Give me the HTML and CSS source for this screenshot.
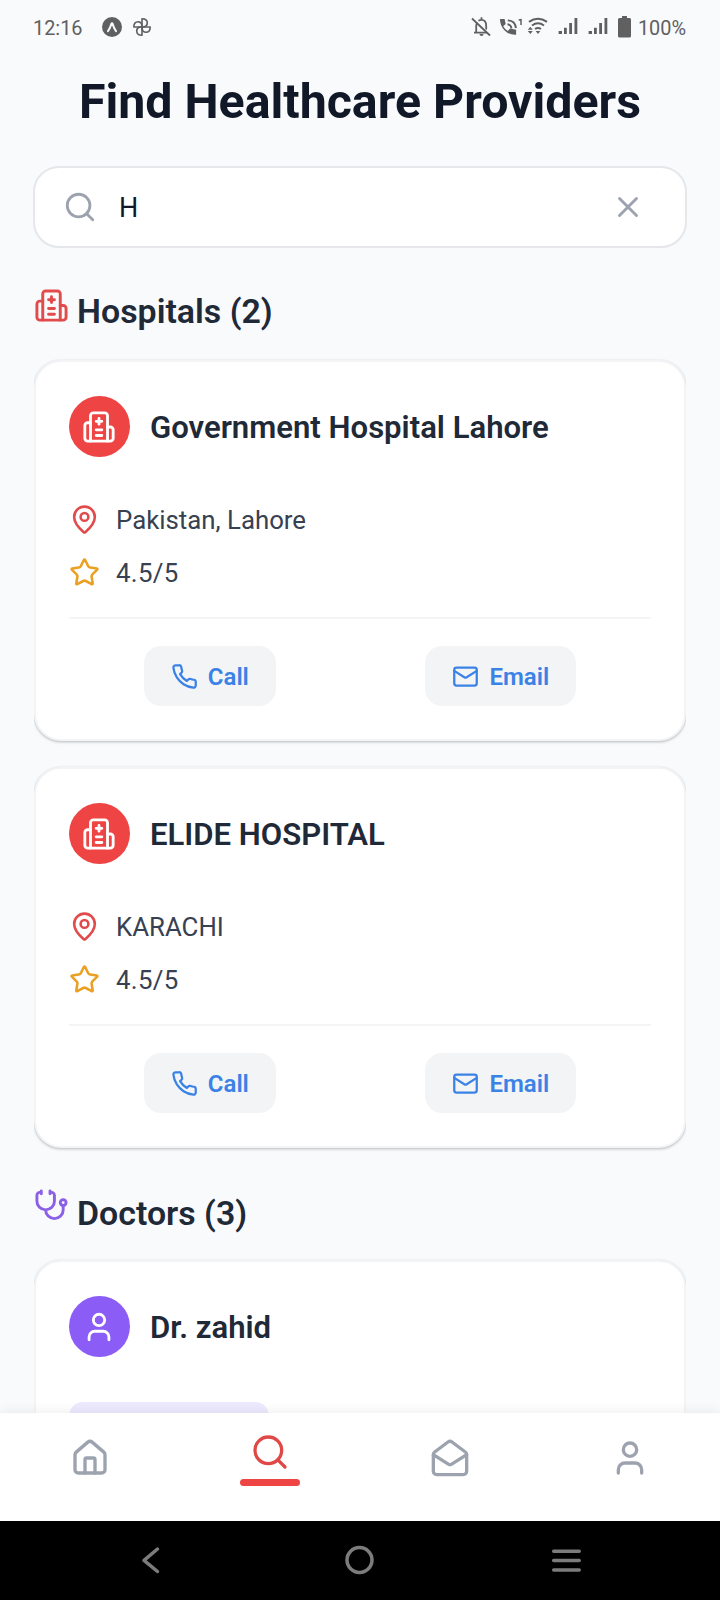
FILE: index.html
```html
<!DOCTYPE html>
<html lang="en">
<head>
<meta charset="utf-8">
<title>Find Healthcare Providers</title>
<link rel="stylesheet" href="styles.css">
</head>
<body>
<svg class="defs" width="0" height="0">
  <symbol id="search" viewBox="0 0 24 24"><circle cx="11" cy="11" r="8"/><path d="m21 21-4.3-4.3"/></symbol>
  <symbol id="close" viewBox="0 0 24 24"><path d="M18 6 6 18M6 6l12 12"/></symbol>
  <symbol id="hospital" viewBox="0 0 24 24"><path d="M12 6v4M14 14h-4M14 18h-4M14 8h-4M18 12h2a2 2 0 0 1 2 2v6a2 2 0 0 1-2 2H4a2 2 0 0 1-2-2v-9a2 2 0 0 1 2-2h2"/><path d="M18 22V4a2 2 0 0 0-2-2H8a2 2 0 0 0-2 2v18"/></symbol>
  <symbol id="pin" viewBox="0 0 24 24"><path d="M20 10c0 4.993-5.539 10.193-7.399 11.799a1 1 0 0 1-1.202 0C9.539 20.193 4 14.993 4 10a8 8 0 0 1 16 0"/><circle cx="12" cy="10" r="3"/></symbol>
  <symbol id="star" viewBox="0 0 24 24"><path d="M11.525 2.295a.53.53 0 0 1 .95 0l2.31 4.679a2.123 2.123 0 0 0 1.595 1.16l5.166.756a.53.53 0 0 1 .294.904l-3.736 3.638a2.123 2.123 0 0 0-.611 1.878l.882 5.14a.53.53 0 0 1-.771.56l-4.618-2.428a2.122 2.122 0 0 0-1.973 0L6.396 21.01a.53.53 0 0 1-.77-.56l.881-5.139a2.122 2.122 0 0 0-.611-1.879L2.16 9.795a.53.53 0 0 1 .294-.906l5.165-.755a2.122 2.122 0 0 0 1.597-1.16z"/></symbol>
  <symbol id="phone" viewBox="0 0 24 24"><path d="M22 16.92v3a2 2 0 0 1-2.18 2 19.79 19.79 0 0 1-8.63-3.07 19.5 19.5 0 0 1-6-6 19.79 19.79 0 0 1-3.07-8.67A2 2 0 0 1 4.11 2h3a2 2 0 0 1 2 1.72 12.84 12.84 0 0 0 .7 2.81 2 2 0 0 1-.45 2.11L8.09 9.91a16 16 0 0 0 6 6l1.27-1.27a2 2 0 0 1 2.11-.45 12.84 12.84 0 0 0 2.81.7A2 2 0 0 1 22 16.92z"/></symbol>
  <symbol id="mail" viewBox="0 0 24 24"><rect width="20" height="16" x="2" y="4" rx="2"/><path d="m22 7-8.97 5.7a1.94 1.94 0 0 1-2.06 0L2 7"/></symbol>
  <symbol id="stethoscope" viewBox="0 0 24 24"><path d="M11 2v2M5 2v2M5 3H4a2 2 0 0 0-2 2v4a6 6 0 0 0 12 0V5a2 2 0 0 0-2-2h-1M8 15a6 6 0 0 0 12 0v-3"/><circle cx="20" cy="10" r="2"/></symbol>
  <symbol id="user" viewBox="0 0 24 24"><path d="M19 21v-2a4 4 0 0 0-4-4H9a4 4 0 0 0-4 4v2"/><circle cx="12" cy="7" r="4"/></symbol>
  <symbol id="home" viewBox="0 0 24 24"><path d="M15 21v-8a1 1 0 0 0-1-1h-4a1 1 0 0 0-1 1v8"/><path d="M3 10a2 2 0 0 1 .709-1.528l7-5.999a2 2 0 0 1 2.582 0l7 5.999A2 2 0 0 1 21 10v9a2 2 0 0 1-2 2H5a2 2 0 0 1-2-2z"/></symbol>
  <symbol id="mail-open" viewBox="0 0 24 24"><path d="M21.2 8.4c.5.38.8.97.8 1.6v10a2 2 0 0 1-2 2H4a2 2 0 0 1-2-2V10a2 2 0 0 1 .8-1.6l8-6a2 2 0 0 1 2.4 0l8 6Z"/><path d="m22 10-8.97 5.7a1.94 1.94 0 0 1-2.06 0L2 10"/></symbol>
</svg>

<div class="screen">
  <header class="status">
    <span class="status-text">12:16</span>
    <svg class="status-apps" width="52" height="24" viewBox="100 15 52 24">
      <circle cx="112" cy="27" r="10" fill="#606060"/>
      <path d="M108 31.200q2.200-3 3.300-7.200.7-1.600 1.400 0 1.100 4.200 3.300 7.200" fill="none" stroke="#f9fafb" stroke-width="2" stroke-linecap="round" stroke-linejoin="round"/>
      <g fill="none" stroke="#606060" stroke-width="1.600" stroke-linejoin="round">
        <path d="M142 27V18.800c3.400 0 5.300 2 5.300 4.300 0 1.900-1.500 3.500-3.400 3.900z"/>
        <path d="M142 27V18.800c3.400 0 5.300 2 5.300 4.300 0 1.900-1.500 3.500-3.400 3.900z" transform="rotate(90 142 27)"/>
        <path d="M142 27V18.800c3.400 0 5.300 2 5.300 4.300 0 1.900-1.500 3.500-3.400 3.900z" transform="rotate(180 142 27)"/>
        <path d="M142 27V18.800c3.400 0 5.300 2 5.300 4.300 0 1.900-1.500 3.500-3.400 3.900z" transform="rotate(270 142 27)"/>
      </g>
    </svg>
    <svg class="status-system" width="164" height="24" viewBox="470 15 164 24" fill="#606060">
      <g fill="none" stroke="#606060" stroke-width="1.800">
        <path d="M472 18.500 490 35.500"/>
        <path d="M474 32.700h13M476.200 32.500v-6.500q0-2 1.100-3.500M478.500 20.800q1.400-.9 3-.9 4.700 0 4.700 6v3.600M481.500 17.300v2.500"/>
      </g>
      <path d="M479.500 34h4q0 2-2 2t-2-2z"/>
      <path d="M500 19h4.600l1.100 5-2.500 2.300q1.600 3 4.600 4.600l2.300-2.400 6 1.200v5q-6.800.4-11.500-4.300T500 19z"/>
      <path d="M507.500 24.300q3.500.5 4 4M507.800 20.400q7.500.3 8.100 7.800" fill="none" stroke="#606060" stroke-width="1.900"/>
      <path d="M518.700 20.100l2.300-.4v5.300" fill="none" stroke="#606060" stroke-width="1.500"/>
      <g fill="none" stroke="#606060" stroke-width="2">
        <path d="M529 21.900q8.900-6.500 18 0M532 25.500q6-4.300 12 0M535 29q3-2 6 0"/>
      </g>
      <path d="M538 34l-2.300-3h4.600zM530.300 26.800l2.500 3h-5zM530.300 34l2.500-3h-5z"/>
      <path d="M558.600 31h3.400v3h-3.400zM564 27.700h2.800V34H564zM569.200 23h2.800v11h-2.800zM574.500 18h2.800v16h-2.800z"/>
      <path d="M588.600 31h3.400v3h-3.400zM594 27.700h2.800V34H594zM599.200 23h2.800v11h-2.800zM604.500 18h2.800v16h-2.800z"/>
      <path d="M622 16h5v2h2.500q1.500 0 1.500 1.500v16.500q0 1.500-1.500 1.500h-10q-1.500 0-1.500-1.500V19.500q0-1.500 1.500-1.500h2.500z"/>
    </svg>
    <span class="status-text">100%</span>
  </header>

  <main class="content">
    <h1 class="title">Find Healthcare Providers</h1>

    <div class="search">
      <svg class="icon icon-34"><use href="#search"/></svg>
      <span class="search-text">H</span>
      <svg class="icon icon-34"><use href="#close"/></svg>
    </div>

    <h2 class="section"><svg class="icon section-icon red"><use href="#hospital"/></svg><span class="section-label">Hospitals (2)</span></h2>

    <article class="card">
      <div class="card-head"><span class="avatar"><svg class="icon icon-34"><use href="#hospital"/></svg></span><h3 class="name">Government Hospital Lahore</h3></div>
      <div class="row"><svg class="icon icon-31 red"><use href="#pin"/></svg><span>Pakistan, Lahore</span></div>
      <div class="row"><svg class="icon icon-31 amber"><use href="#star"/></svg><span class="rating">4.5/5</span></div>
      <div class="actions">
        <div class="button"><svg class="icon icon-27"><use href="#phone"/></svg><span>Call</span></div>
        <div class="button"><svg class="icon icon-27"><use href="#mail"/></svg><span>Email</span></div>
      </div>
    </article>

    <article class="card">
      <div class="card-head"><span class="avatar"><svg class="icon icon-34"><use href="#hospital"/></svg></span><h3 class="name">ELIDE HOSPITAL</h3></div>
      <div class="row"><svg class="icon icon-31 red"><use href="#pin"/></svg><span>KARACHI</span></div>
      <div class="row"><svg class="icon icon-31 amber"><use href="#star"/></svg><span class="rating">4.5/5</span></div>
      <div class="actions">
        <div class="button"><svg class="icon icon-27"><use href="#phone"/></svg><span>Call</span></div>
        <div class="button"><svg class="icon icon-27"><use href="#mail"/></svg><span>Email</span></div>
      </div>
    </article>

    <h2 class="section section-doctors"><svg class="icon section-icon purple"><use href="#stethoscope"/></svg><span class="section-label">Doctors (3)</span></h2>

    <article class="card">
      <div class="card-head"><span class="avatar avatar-purple"><svg class="icon icon-34"><use href="#user"/></svg></span><h3 class="name">Dr. zahid</h3></div>
      <div class="tag"></div>
    </article>
  </main>

  <nav class="tabs">
    <div class="tab"><svg class="icon icon-40"><use href="#home"/></svg></div>
    <div class="tab tab-active"><svg class="icon icon-40"><use href="#search"/></svg><span class="indicator"></span></div>
    <div class="tab"><svg class="icon icon-40"><use href="#mail-open"/></svg></div>
    <div class="tab"><svg class="icon icon-40"><use href="#user"/></svg></div>
  </nav>

  <footer class="system">
    <svg width="30" height="34" viewBox="0 0 30 34"><path d="M20.500 6 7 17.300 20.500 28.500"/></svg>
    <svg width="34" height="34" viewBox="0 0 34 34"><circle cx="17.500" cy="17" r="12.500"/></svg>
    <svg width="34" height="34" viewBox="0 0 34 34"><path d="M3.700 8.300h25.500M3.700 17.600h25.500M3.700 27h25.500"/></svg>
  </footer>
</div>
</body>
</html>
```
FILE: styles.css
```css
* { box-sizing: border-box; }
body { margin: 0; background: #f9fafb; font-family: Roboto, sans-serif; }
h1, h2, h3 { margin: 0; }
.defs { display: block; }
.screen { display: flex; flex-direction: column; width: 720px; height: 1600px; overflow: hidden; background: #f9fafc; }

.icon { display: block; flex: none; fill: none; stroke: currentColor; stroke-width: 2; stroke-linecap: round; stroke-linejoin: round; }
.icon-27 { width: 27px; height: 27px; }
.icon-31 { width: 31px; height: 31px; }
.icon-34 { width: 34px; height: 34px; }
.icon-40 { width: 40px; height: 40px; }
.red { color: #e14b4b; }
.amber { color: #eaa023; }
.purple { color: #8b5fe6; }

.status { flex: none; display: flex; align-items: center; height: 55px; padding: 0 34px 1px 33px; color: #606060; }
.status-text { font-size: 19.900px; line-height: 24px; padding-top: 3px; }
.status-apps { margin-left: 17px; }
.status-system { margin-left: auto; margin-right: 4px; }

.content { flex: 1; min-height: 0; overflow: hidden; padding: 0 33px; }
.title { margin-top: 16px; text-align: center; font-size: 48.300px; line-height: 62px; font-weight: 700; color: #111827; white-space: nowrap; }
.search { display: flex; align-items: center; height: 82px; margin-top: 33px; padding: 0 40px 0 28px; background: #fff; border: 2px solid #e5e7eb; border-radius: 26px; color: #9ca3af; }
.search-text { flex: 1; margin-left: 22px; padding-top: 2px; font-size: 27px; color: #111827; }

.section { display: flex; align-items: center; height: 40px; margin: 43px 0 29px 1px; }
.section-icon { width: 35px; height: 35px; margin-top: -12px; }
.section-label { margin-left: 8px; padding-top: 2px; font-size: 33.900px; line-height: 40px; font-weight: 600; color: #1f2937; }

.card { height: 381px; margin: 0 1px 26px; padding: 34px 33px; background: #fff; border: 2px solid #f3f4f6; border-radius: 27px; box-shadow: 0 1px 3px rgba(0, 0, 0, .27); clip-path: inset(-4px 0 -12px); }
.card-head { display: flex; align-items: center; gap: 20px; margin-bottom: 36px; }
.avatar { display: flex; align-items: center; justify-content: center; width: 61px; height: 61px; padding-right: 1px; border-radius: 50%; background: #ef4444; color: #fff; }
.avatar-purple { background: #8b5cf6; }
.name { padding-top: 2px; font-size: 31.100px; line-height: 40px; font-weight: 600; color: #1f2937; }
.row { display: flex; align-items: center; gap: 16px; height: 53px; font-size: 25.800px; color: #374151; }
.rating { letter-spacing: .3px; }
.actions { display: flex; justify-content: space-around; margin-top: 18px; padding-top: 27px; border-top: 2px solid #f3f4f6; }
.button { display: flex; align-items: center; gap: 10px; height: 60px; padding: 0 27px; border-radius: 17px; background: #f3f4f6; color: #3b82e6; font-size: 24px; font-weight: 600; }
.button span { padding-top: 1px; }
.section-doctors { margin-top: 44px; margin-bottom: 28px; }
.section-doctors .section-icon { margin-top: -14px; }
.section-doctors .section-label { padding-top: 3px; }
.tag { width: 200px; height: 48px; margin-top: 45px; border-radius: 14px; background: #ede9fe; }

.tabs { position: relative; flex: none; display: grid; grid-template-columns: repeat(4, 1fr); height: 108px; background: #fff; color: #9ca3af; box-shadow: 0 -1px 12px rgba(0, 0, 0, .07); }
.tab { display: flex; flex-direction: column; align-items: center; padding-top: 25px; }
.tab-active { padding-top: 19px; color: #e04848; }
.indicator { width: 60px; height: 7px; margin-top: 7px; border-radius: 4px; background: #ef4444; }

.system { position: relative; flex: none; display: flex; justify-content: space-between; align-items: center; height: 79px; padding: 0 136px 2px 137px; background: #000; }
.system svg { fill: none; stroke: #7c7c7c; stroke-width: 3.500; stroke-linecap: round; stroke-linejoin: round; }
```
